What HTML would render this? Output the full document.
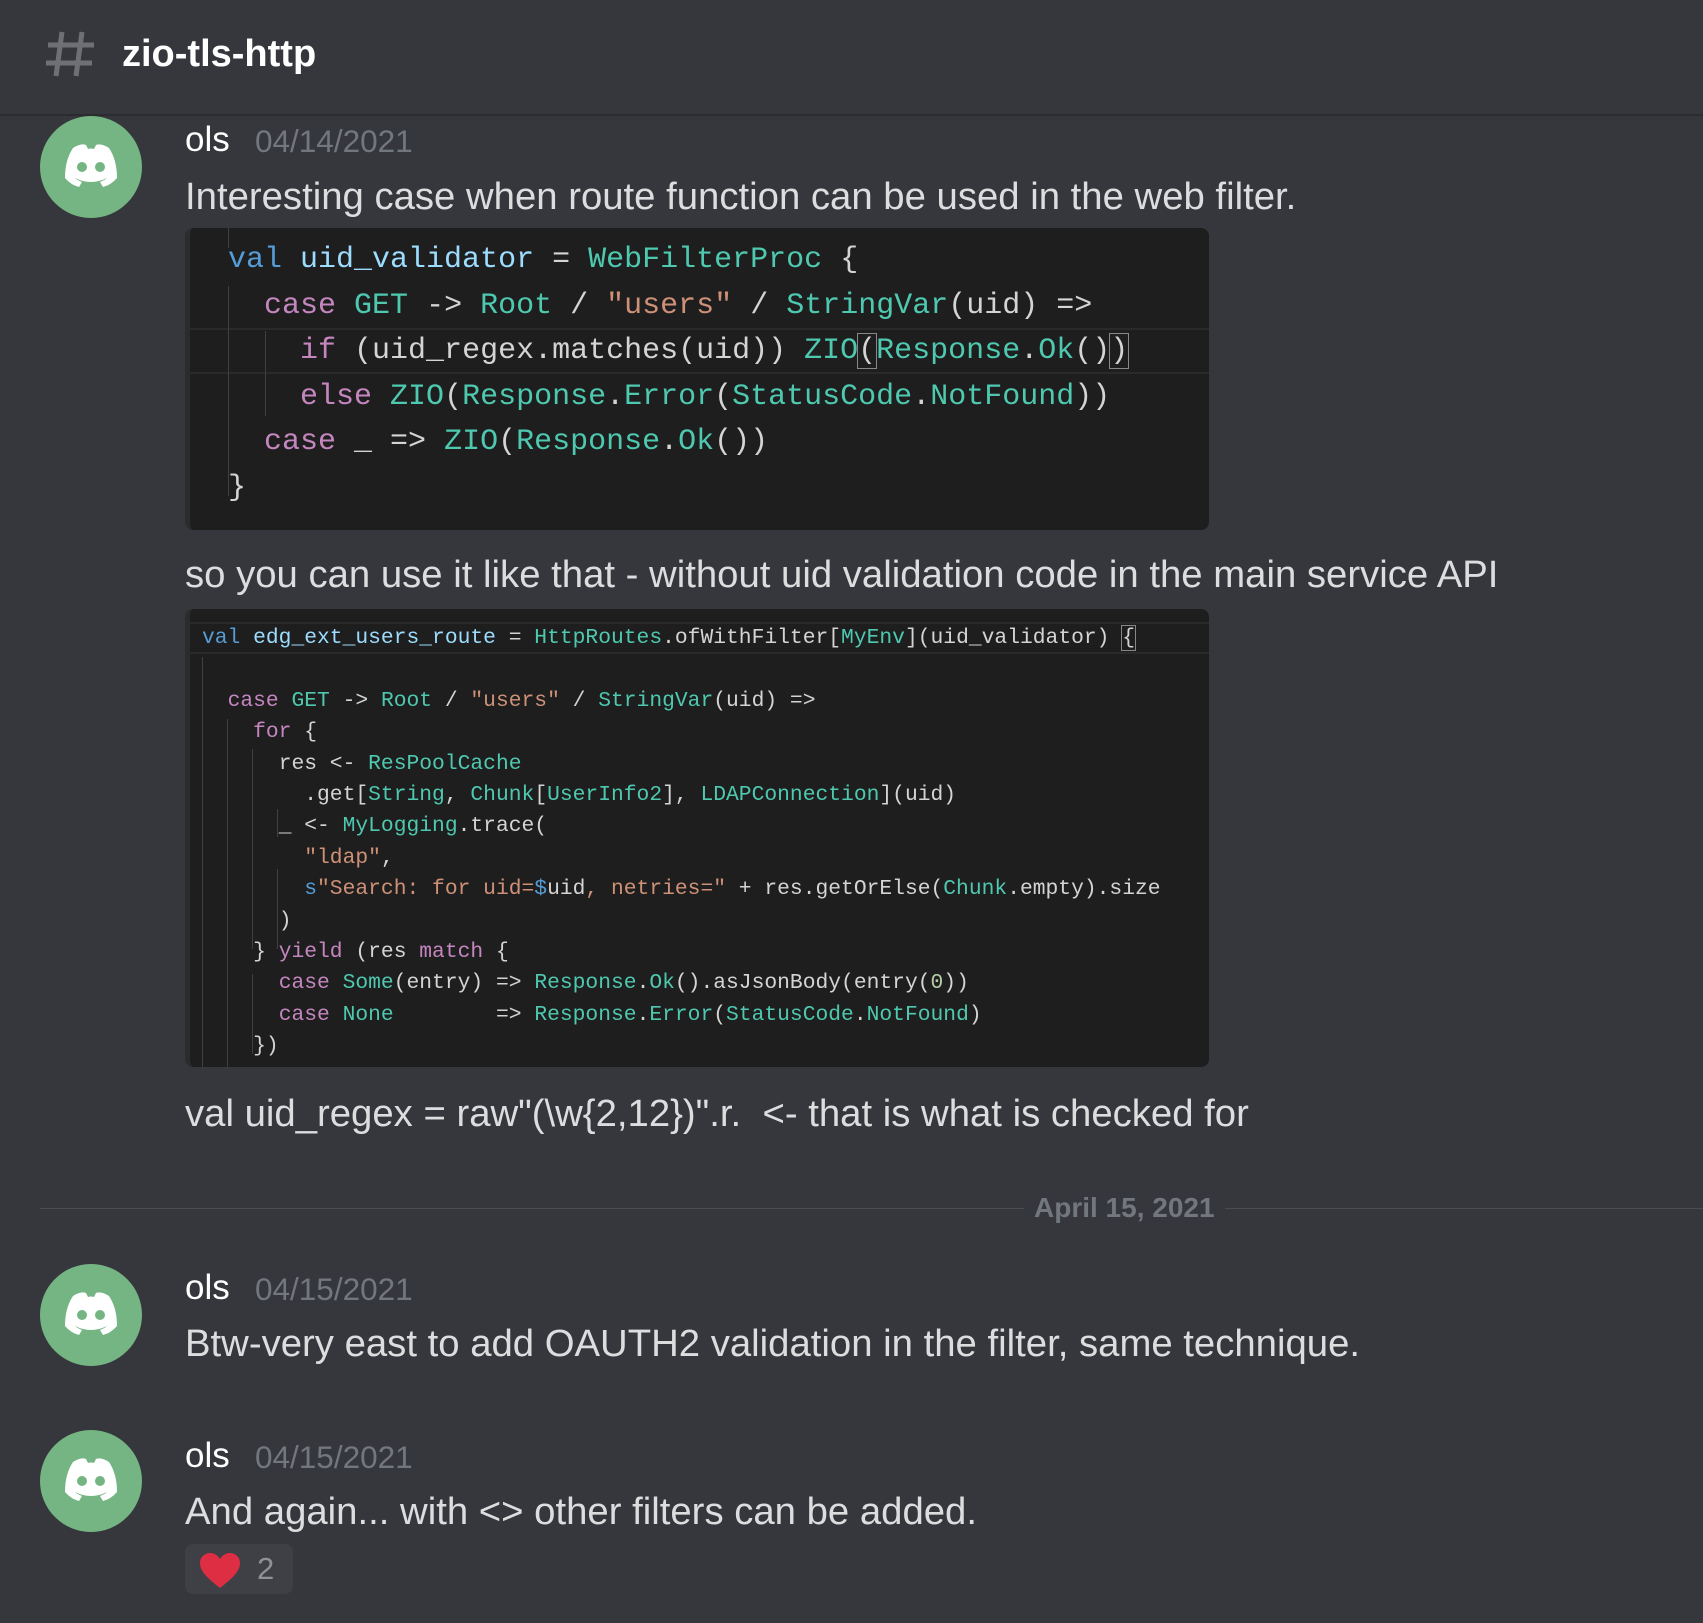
<!DOCTYPE html>
<html><head><meta charset="utf-8"><style>
*{margin:0;padding:0;box-sizing:border-box}
body{width:1703px;height:1623px;background:#36373c;position:relative;overflow:hidden;font-family:"Liberation Sans",sans-serif;color:#dcddde}
.a{position:absolute;white-space:pre}
.hdr{position:absolute;left:0;top:0;width:1703px;height:116px;background:#36373c;border-bottom:2px solid #2b2c30}
.av{position:absolute;width:102px;height:102px;border-radius:50%;background:#75b583;left:40px}
.av svg{position:absolute;left:21px;top:26px}
.nm{font-size:35px;color:#fff;left:185px}
.dt{font-size:31.5px;color:#72767d}
.tx{font-size:38.3px;color:#dcddde;left:185px}
.cb{position:absolute;left:185px;width:1024px;background:#1e1e1e;border-radius:8px;overflow:hidden;border-left:5px solid #2c2c2c}
.mono{font-family:"Liberation Mono",monospace;white-space:pre;position:absolute}
.k{color:#c586c0}.v{color:#569cd6}.i{color:#9cdcfe}.t{color:#4ec9b0}.s{color:#ce9178}.p{color:#d4d4d4}.n{color:#b5cea8}
.gl{position:absolute;width:1px;background:#404040}
</style></head><body>
<div class="hdr"></div>
<svg style="position:absolute;left:44px;top:30px" width="52" height="48" viewBox="0 0 52 48"><g stroke="#6e7075" stroke-width="5" fill="none"><path d="M18 2 L12 46 M38 2 L32 46 M4 15 H50 M2 33 H48"/></g></svg>
<div class="a" style="left:122px;top:31px;font-size:38px;font-weight:bold;color:#fff;line-height:46px">zio-tls-http</div>

<!-- msg1 -->
<div class="av" style="top:116px"><svg width="60" height="48" viewBox="0 0 60 48"><path fill="#fff" d="M12 6 Q20 1 25 3 L27 7 Q30 6 33 7 L35 3 Q40 1 48 6 Q56 18 56 36 Q50 43 42 45 L39 40 Q44 38 46 36 Q30 44 14 36 Q16 38 21 40 L18 45 Q10 43 4 36 Q4 18 12 6Z"/><circle cx="21" cy="25" r="5" fill="#75b583"/><circle cx="39" cy="25" r="5" fill="#75b583"/></svg></div>
<div class="a nm" style="top:118px;line-height:44px">ols</div>
<div class="a dt" style="left:255px;top:123px;line-height:36px">04/14/2021</div>
<div class="a tx" style="top:175px;line-height:44px">Interesting case when route function can be used in the web filter.</div>

<div class="cb" style="top:228px;height:302px">
<div style="position:absolute;left:0;top:100px;width:1024px;height:46px;border-top:2px solid #2a2a2a;border-bottom:2px solid #2a2a2a"></div>
<div class="gl" style="left:38px;top:0;height:20px"></div>
<div class="gl" style="left:38px;top:58px;height:210px"></div>
<div class="gl" style="left:75px;top:103px;height:85px"></div>
<div class="mono" style="left:38px;top:0;font-size:30px;line-height:45.6px;padding-top:10px"><span class="v">val</span> <span class="i">uid_validator</span> <span class="p">=</span> <span class="t">WebFilterProc</span> <span class="p">{</span>
  <span class="k">case</span> <span class="t">GET</span> <span class="p">-&gt;</span> <span class="t">Root</span> <span class="p">/</span> <span class="s">"users"</span> <span class="p">/</span> <span class="t">StringVar</span><span class="p">(uid) =&gt;</span>
    <span class="k">if</span> <span class="p">(uid_regex.matches(uid))</span> <span class="t">ZIO</span><span class="p" style="outline:1px solid #888">(</span><span class="t">Response</span><span class="p">.</span><span class="t">Ok</span><span class="p">()</span><span class="p" style="outline:1px solid #888">)</span>
    <span class="k">else</span> <span class="t">ZIO</span><span class="p">(</span><span class="t">Response</span><span class="p">.</span><span class="t">Error</span><span class="p">(</span><span class="t">StatusCode</span><span class="p">.</span><span class="t">NotFound</span><span class="p">))</span>
  <span class="k">case</span> <span class="p">_ =&gt;</span> <span class="t">ZIO</span><span class="p">(</span><span class="t">Response</span><span class="p">.</span><span class="t">Ok</span><span class="p">())</span>
<span class="p">}</span></div>
</div>

<div class="a tx" style="top:553px;line-height:44px">so you can use it like that - without uid validation code in the main service API</div>

<div class="cb" style="top:609px;height:458px">
<div style="position:absolute;left:0;top:13px;width:1024px;height:32px;border-top:2px solid #2a2a2a;border-bottom:2px solid #2a2a2a"></div>
<div class="gl" style="left:12px;top:48px;height:410px"></div>
<div class="gl" style="left:37px;top:110px;height:348px"></div>
<div class="gl" style="left:62px;top:140px;height:200px"></div>
<div class="gl" style="left:87px;top:200px;height:28px"></div>
<div class="gl" style="left:87px;top:260px;height:80px"></div>
<div class="gl" style="left:62px;top:365px;height:80px"></div>
<div class="mono" style="left:12px;top:14px;font-size:21.3px;line-height:31.4px"><span class="v">val</span> <span class="i">edg_ext_users_route</span> <span class="p">=</span> <span class="t">HttpRoutes</span><span class="p">.ofWithFilter[</span><span class="t">MyEnv</span><span class="p">](uid_validator) </span><span class="p" style="outline:1px solid #888">{</span>

  <span class="k">case</span> <span class="t">GET</span> <span class="p">-&gt;</span> <span class="t">Root</span> <span class="p">/</span> <span class="s">"users"</span> <span class="p">/</span> <span class="t">StringVar</span><span class="p">(uid) =&gt;</span>
    <span class="k">for</span> <span class="p">{</span>
      <span class="p">res &lt;-</span> <span class="t">ResPoolCache</span>
        <span class="p">.get[</span><span class="t">String</span><span class="p">,</span> <span class="t">Chunk</span><span class="p">[</span><span class="t">UserInfo2</span><span class="p">],</span> <span class="t">LDAPConnection</span><span class="p">](uid)</span>
      <span class="p">_ &lt;-</span> <span class="t">MyLogging</span><span class="p">.trace(</span>
        <span class="s">"ldap"</span><span class="p">,</span>
        <span class="v">s</span><span class="s">"Search: for uid=</span><span class="v">$</span><span class="p">uid</span><span class="s">, netries="</span> <span class="p">+ res.getOrElse(</span><span class="t">Chunk</span><span class="p">.empty).size</span>
      <span class="p">)</span>
    <span class="p">}</span> <span class="k">yield</span> <span class="p">(res</span> <span class="k">match</span> <span class="p">{</span>
      <span class="k">case</span> <span class="t">Some</span><span class="p">(entry) =&gt;</span> <span class="t">Response</span><span class="p">.</span><span class="t">Ok</span><span class="p">().asJsonBody(entry(</span><span class="n">0</span><span class="p">))</span>
      <span class="k">case</span> <span class="t">None</span>        <span class="p">=&gt;</span> <span class="t">Response</span><span class="p">.</span><span class="t">Error</span><span class="p">(</span><span class="t">StatusCode</span><span class="p">.</span><span class="t">NotFound</span><span class="p">)</span>
    <span class="p">})</span></div>
</div>

<div class="a tx" style="top:1092px;line-height:44px">val uid_regex = raw"(\w{2,12})".r.  &lt;- that is what is checked for</div>

<!-- divider -->
<div style="position:absolute;left:40px;top:1208px;width:1663px;height:1px;background:#4a4c52"></div>
<div class="a" style="left:1024px;top:1191px;padding:0 10px;background:#36373c;font-size:28px;font-weight:bold;color:#72767d;line-height:34px">April 15, 2021</div>

<!-- msg2 -->
<div class="av" style="top:1264px"><svg width="60" height="48" viewBox="0 0 60 48"><path fill="#fff" d="M12 6 Q20 1 25 3 L27 7 Q30 6 33 7 L35 3 Q40 1 48 6 Q56 18 56 36 Q50 43 42 45 L39 40 Q44 38 46 36 Q30 44 14 36 Q16 38 21 40 L18 45 Q10 43 4 36 Q4 18 12 6Z"/><circle cx="21" cy="25" r="5" fill="#75b583"/><circle cx="39" cy="25" r="5" fill="#75b583"/></svg></div>
<div class="a nm" style="top:1266px;line-height:44px">ols</div>
<div class="a dt" style="left:255px;top:1271px;line-height:36px">04/15/2021</div>
<div class="a tx" style="top:1322px;line-height:44px">Btw-very east to add OAUTH2 validation in the filter, same technique.</div>

<!-- msg3 -->
<div class="av" style="top:1430px"><svg width="60" height="48" viewBox="0 0 60 48"><path fill="#fff" d="M12 6 Q20 1 25 3 L27 7 Q30 6 33 7 L35 3 Q40 1 48 6 Q56 18 56 36 Q50 43 42 45 L39 40 Q44 38 46 36 Q30 44 14 36 Q16 38 21 40 L18 45 Q10 43 4 36 Q4 18 12 6Z"/><circle cx="21" cy="25" r="5" fill="#75b583"/><circle cx="39" cy="25" r="5" fill="#75b583"/></svg></div>
<div class="a nm" style="top:1434px;line-height:44px">ols</div>
<div class="a dt" style="left:255px;top:1439px;line-height:36px">04/15/2021</div>
<div class="a tx" style="top:1490px;line-height:44px">And again... with &lt;&gt; other filters can be added.</div>

<div style="position:absolute;left:185px;top:1544px;width:108px;height:50px;background:#3f4046;border-radius:8px"></div>
<svg style="position:absolute;left:199px;top:1553px" width="42" height="36" viewBox="0 0 42 36"><path fill="#dd2e44" d="M21 35 C8 25 1 18 1 10 C1 4 6 0 11 0 C16 0 19 3 21 6 C23 3 26 0 31 0 C36 0 41 4 41 10 C41 18 34 25 21 35Z"/></svg>
<div class="a" style="left:257px;top:1550px;font-size:31px;color:#8e9297;line-height:38px">2</div>
</body></html>
